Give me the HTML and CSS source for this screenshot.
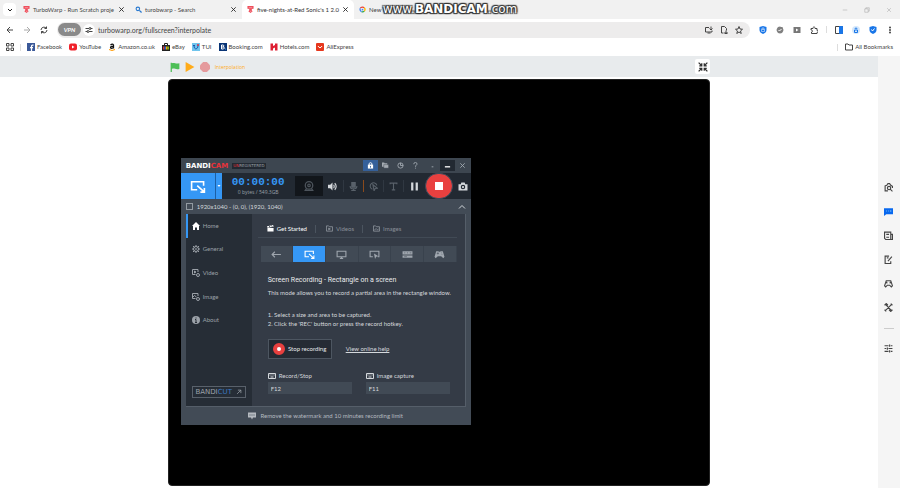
FILE: index.html
```html
<!DOCTYPE html>
<html lang="en">
<head>
    <meta charset="UTF-8">
    <meta name="viewport" content="width=device-width, initial-scale=1.0">
    <title>five-nights-at-Red Sonic's 1 2.0</title>
    <link rel="stylesheet" href="styles.css">
</head>
<body>
    <svg class="sprite" aria-hidden="true">
        <symbol id="close" viewBox="0 0 16 16"><path d="M3 3l10 10M13 3L3 13"/></symbol>
        <symbol id="warp" viewBox="0 0 16 16"><path d="M1 0h14v6l-4 1v3l2 2-5 4-5-4 2-2V7L1 6z" fill="#ef4f5c" stroke="none"/><path d="M4 4h8M7 12h3" stroke="#fff" stroke-width="1"/></symbol>
        <symbol id="region" viewBox="0 0 20 16"><path d="M9 12H2V2h15v5M9 7l8 7M18 10v5h-5"/></symbol>
        <symbol id="keyboard" viewBox="0 0 16 12"><path d="M1 1h14v10H1zM3 4h2M7 4h2M11 4h2M5 8h6"/></symbol>
    </svg>

    <header class="browser">
        <div class="tab-strip">
            <button class="tab-search" aria-label="Search tabs"><svg viewBox="0 0 16 16"><path d="M4 6l4 4 4-4"/></svg></button>
            <div class="tab">
                <svg class="favicon"><use href="#warp"/></svg>
                <a href="#">TurboWarp - Run Scratch proje</a>
                <button aria-label="Close tab"><svg><use href="#close"/></svg></button>
            </div>
            <div class="tab">
                <svg class="favicon" viewBox="0 0 16 16"><circle cx="6.500" cy="6.500" r="4" stroke="#2878cf" stroke-width="2.500"/><path d="M10 10l5 5" stroke="#2878cf" stroke-width="3"/></svg>
                <a href="#">turobwarp - Search</a>
                <button aria-label="Close tab"><svg><use href="#close"/></svg></button>
            </div>
            <div class="tab active">
                <svg class="favicon"><use href="#warp"/></svg>
                <a href="#">five-nights-at-Red Sonic's 1 2.0</a>
                <button aria-label="Close tab"><svg><use href="#close"/></svg></button>
            </div>
            <div class="tab">
                <svg class="favicon" viewBox="0 0 16 16"><g stroke-width="3"><path d="M3 5a6 6 0 0 1 9-1" stroke="#ea4335"/><path d="M12 4a6 6 0 0 1 0 8" stroke="#fbbc04"/><path d="M12 12a6 6 0 0 1-6 1" stroke="#34a853"/><path d="M6 13a6 6 0 0 1-3-8" stroke="#4285f4"/></g><circle cx="8" cy="8" r="2" fill="#4285f4" stroke="none"/></svg>
                <a href="#">New</a>
            </div>
            <div class="window-buttons">
                <button aria-label="Minimize"><svg viewBox="0 0 16 16"><path d="M2 8h12"/></svg></button>
                <button aria-label="Restore"><svg viewBox="0 0 16 16"><path d="M2 5h9v9H2zM5 5V2h9v9h-3"/></svg></button>
                <button aria-label="Close"><svg><use href="#close"/></svg></button>
            </div>
            <div class="watermark">www.<b>BANDICAM</b>.com</div>
        </div>

        <div class="toolbar">
            <button aria-label="Back"><svg viewBox="0 0 16 16"><path d="M14 8H2M8 2L2 8l6 6"/></svg></button>
            <button class="muted" aria-label="Forward"><svg viewBox="0 0 16 16"><path d="M2 8h12M8 2l6 6-6 6"/></svg></button>
            <button aria-label="Reload"><svg viewBox="0 0 16 16"><path d="M2 8a6 6 0 0 1 11-3M14 8a6 6 0 0 1-11 3M13 1v4H9M3 15v-4h4"/></svg></button>
            <div class="address">
                <button class="vpn">VPN</button>
                <button class="site-info" aria-label="Site settings"><svg viewBox="0 0 16 16"><path d="M1 5h7M11 5h4M1 11h4M8 11h7"/><circle cx="10" cy="5" r="2"/><circle cx="6" cy="11" r="2"/></svg></button>
                <input type="text" aria-label="Address" value="turbowarp.org/fullscreen?interpolate">
                <button aria-label="Install app"><svg viewBox="0 0 16 16"><path d="M8 3H1v9h13V9M5 14h6M12 1v6M9 5l3 3 3-3"/></svg></button>
                <button aria-label="Save page"><svg viewBox="0 0 16 16"><path d="M7 14H3V1h6l4 4v4M12 9v5M9 12l3 3 3-3M9 15h6"/></svg></button>
                <button aria-label="Bookmark"><svg viewBox="0 0 16 16"><path d="M8 1l2 5 5 .5-4 3.500 1.500 5L8 12l-4.500 3L5 10 1 6.500 6 6z"/></svg></button>
            </div>
            <div class="extensions">
                <button aria-label="Privacy"><svg viewBox="0 0 16 16"><path d="M8 0l7 2v6c0 4-3 6-7 8-4-2-7-4-7-8V2z" fill="#1976e8" stroke="none"/><path d="M5 7h6v4H5zM6 7V4h4v3" stroke="#fff" stroke-width="1"/></svg></button>
                <button aria-label="Checker"><svg viewBox="0 0 16 16"><path d="M8 1l2 1 3 0 1 3 1 3-1 3-2 3-4 1-4-1-2-3-1-3 1-3 2-3z" fill="#808080" stroke="none"/><path d="M5 8l2 2 4-4" stroke="#fff"/></svg></button>
                <button aria-label="Video"><svg viewBox="0 0 16 16"><path d="M1 2h14v12H1z" fill="#777" stroke="none"/><path d="M6 5l5 3-5 3z" fill="#fff" stroke="none"/></svg></button>
                <button aria-label="Extensions"><svg viewBox="0 0 16 16"><path d="M2 5h4c-1-4 5-4 4 0h4v4c3-1 3 4 0 4v2H3v-3c3 0 3-4-1-4z"/></svg></button>
                <span class="divider"></span>
                <button aria-label="Side panel"><svg viewBox="0 0 16 16"><path d="M1 1h14v14H1z"/><path d="M9 1h6v14H9z" fill="#1976e8" stroke="#1976e8"/></svg></button>
                <button class="profile" aria-label="Profile"><svg viewBox="0 0 16 16"><circle cx="8" cy="8" r="8" fill="#d4e7fb" stroke="none"/><path d="M5 8h6v5H5zM6 6a2 2 0 1 1 4 0" stroke="#1976e8"/></svg></button>
                <button aria-label="Security"><svg viewBox="0 0 16 16"><path d="M8 0l7 2v6c0 4-3 6-7 8-4-2-7-4-7-8V2z" fill="#1976e8" stroke="none"/><path d="M5 7l2 3 4-5" stroke="#fff"/></svg></button>
                <button aria-label="Menu"><svg viewBox="0 0 16 16"><g fill="#444" stroke="none"><circle cx="8" cy="3" r="2"/><circle cx="8" cy="8" r="2"/><circle cx="8" cy="13" r="2"/></g></svg></button>
            </div>
        </div>

        <nav class="bookmarks" aria-label="Bookmarks">
            <button aria-label="Apps"><svg viewBox="0 0 16 16"><path d="M1 1h5v5H1zM10 1h5v5h-5zM1 10h5v5H1zM10 10h5v5h-5z"/></svg></button>
            <span class="divider"></span>
            <a href="#"><svg viewBox="0 0 16 16"><path d="M0 0h16v16H0z" fill="#3b5998" stroke="none"/><path d="M13 4h-2q-2 0-2 2v10M6 9h6" stroke="#fff" stroke-width="2.500"/></svg>Facebook</a>
            <a href="#"><svg viewBox="0 0 16 16"><rect y="1" width="16" height="14" rx="4" fill="#f0202a" stroke="none"/><path d="M6 5l5 3-5 3z" fill="#fff" stroke="none"/></svg>YouTube</a>
            <a href="#"><svg viewBox="0 0 16 16"><path d="M5 4q4-4 6 0v7M11 6q-6 0-6 3 1 3 6 0" stroke="#111" stroke-width="2.500"/><path d="M2 13q6 4 12 0" stroke="#f90" stroke-width="2"/></svg>Amazon.co.uk</a>
            <a href="#"><svg viewBox="0 0 16 16"><path d="M5 5V1h6v4" stroke="#222"/><path d="M0 4h16v12H0z" fill="#222" stroke="none"/><path d="M2 7h3v6H2z" fill="#e53238" stroke="none"/><path d="M5 7h3v6H5z" fill="#2864d2" stroke="none"/><path d="M8 7h3v6H8z" fill="#f5af02" stroke="none"/><path d="M11 7h3v6h-3z" fill="#86b817" stroke="none"/></svg>eBay</a>
            <a href="#"><svg viewBox="0 0 16 16"><path d="M0 0h16v16H0z" fill="#70c5ed" stroke="none"/><path d="M4 5c0 10 8 8 8 0M2 5h4" stroke="#1754ad" stroke-width="2"/><circle cx="12" cy="4" r="2" fill="#d92d42" stroke="none"/></svg>TUI</a>
            <a href="#"><svg viewBox="0 0 16 16"><path d="M0 0h16v16H0z" fill="#0a3576" stroke="none"/><path d="M5 4v8h4q4-2 0-4 2-4-1-4zM5 8h4" stroke="#fff" stroke-width="2"/><circle cx="13" cy="12" r="1" fill="#4fb9ff" stroke="none"/></svg>Booking.com</a>
            <a href="#"><svg viewBox="0 0 16 16"><path d="M1 1h5v5l4-2V1h5v14h-5V9l-4 2v4H1z" fill="#dd1f32" stroke="none"/></svg>Hotels.com</a>
            <a href="#"><svg viewBox="0 0 16 16"><rect width="16" height="16" rx="2" fill="#e6371d" stroke="none"/><path d="M4 6q4 7 8 0" stroke="#fff" stroke-width="2"/></svg>AliExpress</a>
            <div class="all-bookmarks">
                <span class="divider"></span>
                <a href="#"><svg viewBox="0 0 16 16"><path d="M1 2h5l2 2h7v10H1z"/></svg>All Bookmarks</a>
            </div>
        </nav>
    </header>

    <div class="viewport">
        <main class="page">
            <div class="player-bar">
                <div class="player-controls">
                    <button aria-label="Green flag"><svg viewBox="0 0 16 16"><path d="M1 1v15h2v-5c4-2 6 2 12 0V2C9 4 7 0 3 2V1z" fill="#4cbf56" stroke="none"/></svg></button>
                    <button aria-label="Resume"><svg viewBox="0 0 16 16"><path d="M1 0l14 8-14 8z" fill="#ffab19" stroke="none"/></svg></button>
                    <button aria-label="Stop"><svg viewBox="0 0 16 16"><path d="M5 0h6l5 5v6l-5 5H5l-5-5V5z" fill="#e59a9d" stroke="none"/></svg></button>
                    <span>Interpolation</span>
                    <button class="shrink" aria-label="Exit fullscreen"><svg viewBox="0 0 16 16"><path d="M1 1l5 5M6 2v4H2M15 1l-5 5M10 2v4h4M1 15l5-5M6 14v-4H2M15 15l-5-5M10 14v-4h4"/></svg></button>
                </div>
            </div>
            <div class="stage">
                <section class="bandicam" aria-label="Bandicam">
                    <div class="title-bar">
                        <strong class="logo">BANDI<em>CAM</em></strong>
                        <span class="unregistered"><em>UN</em>REGISTERED</span>
                        <div class="title-buttons">
                            <button class="lock" aria-label="Register"><svg viewBox="0 0 16 16"><path d="M2 6h12v9H2z" fill="#fff" stroke="none"/><path d="M5 7V3q3-3 6 0v4" stroke="#fff"/><path d="M8 9v4" stroke="#35609a"/></svg></button>
                            <button aria-label="Open folder"><svg viewBox="0 0 16 16"><path d="M0 1h5l1 2h6v8H0z" fill="#a4abb2" stroke="none"/><path d="M4 6h11v8H4z" fill="#a4abb2" stroke="#3d4650" stroke-width="1"/></svg></button>
                            <button aria-label="Timer"><svg viewBox="0 0 16 16"><circle cx="8" cy="8" r="6"/><path d="M8 2v6h6"/></svg></button>
                            <button aria-label="Help"><svg viewBox="0 0 16 16"><path d="M4 5q0-4 4-4 5 1 3 5-3 2-3 5M8 13v2"/></svg></button>
                            <button class="spaced" aria-label="Tray"><svg viewBox="0 0 16 16"><path d="M6 11h4"/></svg></button>
                            <button class="minimize" aria-label="Minimize"><svg viewBox="0 0 16 16"><path d="M2 11h12" stroke-width="3"/></svg></button>
                            <button aria-label="Close"><svg><use href="#close"/></svg></button>
                        </div>
                    </div>

                    <div class="record-bar">
                        <button class="mode" aria-label="Rectangle mode"><svg><use href="#region"/></svg></button>
                        <button class="mode-menu" aria-label="Choose mode"><svg viewBox="0 0 8 8"><path d="M1 2h6L4 6z" fill="#fff" stroke="none"/></svg></button>
                        <div class="clock"><time>00:00:00</time><small>0 bytes / 549.3GB</small></div>
                        <button class="webcam" aria-label="Webcam"><svg viewBox="0 0 16 16"><circle cx="8" cy="7" r="6"/><circle cx="8" cy="7" r="2"/><path d="M4 12l-2 3h12l-2-3"/></svg></button>
                        <div class="tools">
                            <button class="bright" aria-label="Sound"><svg viewBox="0 0 16 16"><path d="M0 5h4l4-4v14l-4-4H0z" fill="#d4d8dc" stroke="none"/><path d="M10 5q2 3 0 6M12 2q5 6 0 12"/></svg></button>
                            <button aria-label="Microphone"><svg viewBox="0 0 16 16"><path d="M5 1h6v8H5z" fill="#59616a"/><path d="M2 7c0 7 12 7 12 0M8 12v3M4 15h8"/></svg></button>
                            <button class="warm" aria-label="Mouse effects"><svg viewBox="0 0 16 16"><path d="M6 13A6 6 0 1 1 14 6M7 5l8 6-4 .5-2 4z"/></svg></button>
                            <button aria-label="Text"><svg viewBox="0 0 16 16"><path d="M2 4V2h12v2M8 2v12M5 14h6"/></svg></button>
                            <button class="bright pause" aria-label="Pause"><svg viewBox="0 0 16 16"><path d="M4 1v14M12 1v14" stroke-width="4"/></svg></button>
                        </div>
                        <button class="rec" aria-label="Stop recording"><span></span></button>
                        <button class="camera" aria-label="Screenshot"><svg viewBox="0 0 16 16"><path d="M0 4h4l1-3h6l1 3h4v11H0z" fill="#d4d8dc" stroke="none"/><circle cx="8" cy="9" r="3" stroke="#222932"/></svg></button>
                    </div>

                    <div class="area">
                        <input type="checkbox" id="area">
                        <label for="area">1920x1040 - (0, 0), (1920, 1040)</label>
                        <button aria-label="Collapse"><svg viewBox="0 0 16 16"><path d="M2 11l6-6 6 6"/></svg></button>
                    </div>

                    <div class="panel">
                        <nav class="menu" aria-label="Sections">
                            <ul>
                                <li class="current"><a href="#"><svg viewBox="0 0 16 16"><path d="M8 0L0 8h2v8h4v-5h4v5h4V8h2z" fill="#fff" stroke="none"/></svg>Home</a></li>
                                <li><a href="#"><svg viewBox="0 0 16 16"><circle cx="8" cy="8" r="5"/><circle cx="8" cy="8" r="1"/><path d="M8 0v3M8 13v3M0 8h3M13 8h3M2 2l3 3M11 11l3 3M14 2l-3 3M5 11l-3 3"/></svg>General</a></li>
                                <li><a href="#"><svg viewBox="0 0 16 16"><path d="M7 11H1V1h11v5M5 4l3 2-3 2z"/><circle cx="12" cy="12" r="3"/></svg>Video</a></li>
                                <li><a href="#"><svg viewBox="0 0 16 16"><path d="M7 11H1V1h11v5M1 9l4-4 4 3"/><circle cx="12" cy="12" r="3"/></svg>Image</a></li>
                                <li><a href="#"><svg viewBox="0 0 16 16"><circle cx="8" cy="8" r="8" fill="#9ba1a8" stroke="none"/><path d="M8 3v2M6 7h2v6M6 13h4" stroke="#262d36" stroke-width="2"/></svg>About</a></li>
                            </ul>
                            <a class="bandicut" href="#"><span>BANDI<em>CUT</em></span><svg viewBox="0 0 16 16"><path d="M3 13L13 3M5 3h8v8"/></svg></a>
                        </nav>
                        <div class="content">
                            <div class="tabs">
                                <a class="current" href="#"><svg viewBox="0 0 16 16"><path d="M1 7h14v8H1zM0 3l14-3 1 4-14 2z" fill="#fff" stroke="none"/><path d="M5 2l2 3M10 1l2 3" stroke="#343b46"/></svg>Get Started</a>
                                <a href="#"><svg viewBox="0 0 16 16"><path d="M1 2h5l2 2h7v10H1zM6 7l4 2-4 2z"/></svg>Videos</a>
                                <a href="#"><svg viewBox="0 0 16 16"><path d="M1 2h5l2 2h7v10H1zM3 12l4-4 3 3 3-2"/></svg>Images</a>
                            </div>
                            <div class="modes">
                                <button aria-label="Back"><svg viewBox="0 0 20 16"><path d="M18 8H2M7 3L2 8l5 5"/></svg></button>
                                <button class="current" aria-label="Rectangle on a screen"><svg><use href="#region"/></svg></button>
                                <button aria-label="Fullscreen"><svg viewBox="0 0 20 16"><path d="M2 2h16v10H2zM7 15h6M10 12v3"/></svg></button>
                                <button aria-label="Around mouse"><svg viewBox="0 0 20 16"><path d="M7 12H2V2h16v10h-2"/><path d="M9 6l8 5-4 1-2 4z" fill="#9fa6ae" stroke="none"/></svg></button>
                                <button aria-label="Device recording"><svg viewBox="0 0 20 16"><path d="M1 2h18v6H1zM1 10h18v4H1z" fill="#9fa6ae" stroke="none"/><path d="M4 5h2M9 5h2M14 5h3M4 12h5" stroke="#414a55" stroke-width="1"/></svg></button>
                                <button aria-label="Game recording"><svg viewBox="0 0 20 16"><path d="M4 2h4l1 1h2l1-1h4l3 10-2 3-4-4H7l-4 4-2-3z" fill="#9fa6ae" stroke="none"/><path d="M5 6h4M7 4v4M13 5h1M14 8h1" stroke="#414a55" stroke-width="1"/></svg></button>
                            </div>
                            <div class="details">
                                <h1>Screen Recording - Rectangle on a screen</h1>
                                <p>This mode allows you to record a partial area in the rectangle window.</p>
                                <ol>
                                    <li>1. Select a size and area to be captured.</li>
                                    <li>2. Click the 'REC' button or press the record hotkey.</li>
                                </ol>
                                <div class="actions">
                                    <button class="stop"><span class="stop-icon"></span>Stop recording</button>
                                    <a href="#">View online help</a>
                                </div>
                                <div class="hotkeys">
                                    <div>
                                        <label for="record-key"><svg><use href="#keyboard"/></svg>Record/Stop</label>
                                        <input type="text" id="record-key" value="F12">
                                    </div>
                                    <div>
                                        <label for="capture-key"><svg><use href="#keyboard"/></svg>Image capture</label>
                                        <input type="text" id="capture-key" value="F11">
                                    </div>
                                </div>
                            </div>
                        </div>
                    </div>

                    <a class="limit" href="#"><svg viewBox="0 0 16 16"><path d="M0 1h16v10h-6l-2 4-2-4H0z" fill="#b5bac0" stroke="none"/><path d="M3 6h2M7 6h2M11 6h2" stroke="#424b56" stroke-width="2"/></svg>Remove the watermark and 10 minutes recording limit</a>
                </section>
            </div>
        </main>

        <aside class="side-panel">
            <button aria-label="Visual search"><svg viewBox="0 0 16 16"><path d="M7 14H2V5l3-1 2-3h3l2 3 3 2v3"/><circle cx="9" cy="9" r="3"/><path d="M11 11l4 4"/></svg></button>
            <button aria-label="Chat"><svg viewBox="0 0 16 16"><path d="M0 2h16v11H4l-4 3z" fill="#0868ee" stroke="none"/><path d="M4 7h1M8 7h1M11 7h2" stroke="#a8e5ff" stroke-width="2"/></svg></button>
            <button aria-label="News"><svg viewBox="0 0 16 16"><path d="M1 2h11v13H3l-2-2zM12 6h3v9h-3M4 6h5M4 11h5"/></svg></button>
            <button aria-label="Notes"><svg viewBox="0 0 16 16"><path d="M9 2H2v13h10v-4M5 5h3M7 11l7-8"/></svg></button>
            <button aria-label="Games"><svg viewBox="0 0 16 16"><path d="M4 3h8l3 9-2 2-3-3H6l-3 3-2-2zM5 5v3M11 5v3"/></svg></button>
            <button aria-label="Tools"><svg viewBox="0 0 16 16"><path d="M2 2l12 12M14 2L2 14M1 4l3-3 3 3M9 12l3 3 3-3M12 1l3 3M1 12l3 3"/></svg></button>
            <hr>
            <button aria-label="Customize"><svg viewBox="0 0 16 16"><path d="M1 3h7M12 3h3M1 8h3M8 8h7M1 13h7M12 13h3M10 1v4M6 6v4M10 11v4"/></svg></button>
        </aside>
    </div>
</body>
</html>
```
FILE: styles.css
```css
:root {
    --font-ui: Lato, "Open Sans", sans-serif;
    --font-wide: "DejaVu Sans", sans-serif;
    --blue: #3597f5;
    --frame: #424b56;
    --dark: #262d36;
}

* { box-sizing: border-box; }
html, body { height: 100%; margin: 0; }
body {
    display: flex;
    flex-direction: column;
    overflow: hidden;
    background: #fff;
    color: #444;
    font: 6px/8px var(--font-ui);
}
button, input { font: inherit; color: inherit; }
button {
    display: flex;
    align-items: center;
    justify-content: center;
    padding: 0;
    border: 0;
    background: none;
}
a { color: inherit; text-decoration: none; }
em { font-style: normal; }
svg {
    flex: none;
    width: 8px;
    height: 8px;
    fill: none;
    stroke: currentColor;
    stroke-width: 2;
}
.sprite { position: absolute; width: 0; height: 0; }
.divider { width: 1px; height: 7px; background: #ddd; }

/* Browser chrome */
.tab-strip {
    position: relative;
    display: flex;
    height: 19px;
    padding-left: 3px;
    background: #f1f1f1;
}
.tab-search {
    width: 13px;
    height: 13px;
    margin: 3px 2px 0 0;
    border-radius: 4px;
    background: #fff;
    color: #222;
}
.tab {
    display: flex;
    flex: 0 1 112px;
    align-items: center;
    gap: 3px;
    min-width: 0;
    padding: 0 5px;
    border-radius: 5px 5px 0 0;
}
.tab.active { background: #fff; color: #333; }
.tab a { flex: 1; white-space: nowrap; }
.tab svg { width: 7px; height: 7px; }
.tab button { color: #222; }
.window-buttons {
    display: flex;
    gap: 14px;
    margin-left: auto;
    padding-right: 7px;
    color: #888;
}
.window-buttons svg { width: 8px; height: 6px; stroke-width: 1; }
.watermark {
    position: absolute;
    top: 0;
    left: 0;
    right: 0;
    color: #fff;
    font: 12px/19px var(--font-wide);
    text-align: center;
    text-shadow: 0 0 1px #333, 0 0 2px #333, 1px 1px 1px #333, -1px -1px 1px #333, 1px -1px 1px #333, -1px 1px 1px #333;
    pointer-events: none;
}
.toolbar {
    display: flex;
    align-items: center;
    gap: 9px;
    height: 21px;
    padding: 0 6px;
    color: #444;
}
.toolbar .muted { color: #aaa; }
.address {
    display: flex;
    flex: 1;
    align-items: center;
    gap: 7px;
    height: 16px;
    padding: 0 7px 0 1px;
    border-radius: 8px;
    background: #edecec;
}
.address input {
    flex: 1;
    min-width: 0;
    margin-left: -4px;
    padding: 0;
    border: 0;
    background: none;
    font-size: 7px;
}
.vpn {
    width: 23px;
    height: 13px;
    border-radius: 7px;
    background: #8a8a8a;
    color: #fff;
    font-weight: bold;
    font-style: italic;
}
.site-info {
    width: 12px;
    height: 12px;
    margin-left: -5px;
    border-radius: 6px;
    background: #fff;
}
.extensions { display: flex; align-items: center; gap: 9px; }
.extensions .divider { margin: 0 -1px; }
.bookmarks {
    display: flex;
    align-items: center;
    gap: 7px;
    height: 16px;
    padding: 0 7px 2px 6px;
}
.bookmarks a { display: flex; align-items: center; gap: 2px; }
.bookmarks > .divider { margin: 0 -1px; }
.all-bookmarks { display: flex; align-items: center; gap: 7px; margin-left: auto; }

/* TurboWarp page */
.viewport { display: flex; flex: 1; min-height: 0; }
.page {
    display: flex;
    flex: 1;
    flex-direction: column;
    align-items: center;
}
.player-bar {
    display: flex;
    justify-content: center;
    width: 100%;
    height: 21px;
    margin-bottom: 2px;
    background: #e8ebed;
}
.player-controls {
    display: flex;
    align-items: center;
    gap: 5px;
    width: calc((100vh - 81px) * 4 / 3);
    padding-left: 2px;
    color: #ffab19;
}
.player-controls svg { width: 10px; height: 10px; }
.player-controls span { font: 5px/8px "Open Sans", sans-serif; }
.player-controls .shrink {
    width: 15px;
    height: 15px;
    margin-left: auto;
    border-radius: 2px;
    background: #fff;
    color: #333;
}
.stage {
    position: relative;
    flex: 1;
    aspect-ratio: 4 / 3;
    margin-bottom: 2px;
    border: 1px solid #222;
    border-radius: 4px;
    background: #000;
}
.side-panel {
    display: flex;
    flex-direction: column;
    align-items: center;
    justify-content: center;
    width: 22px;
    padding: 0 1px 8px 0;
    background: #f5f5f5;
}
.side-panel button { width: 20px; height: 24px; }
.side-panel svg { width: 9px; height: 9px; }
.side-panel hr { width: 10px; margin: 8px 0; border: 0; border-top: 1px solid #ccc; }

/* Bandicam window */
.bandicam {
    position: absolute;
    top: 78px;
    left: 12px;
    width: 290px;
    background: var(--frame);
    color: #d4d8dc;
}
.title-bar {
    display: flex;
    align-items: center;
    gap: 4px;
    height: 15px;
    padding: 0 1px 0 5px;
    background: #3d4650;
}
.logo { color: #fff; font: bold 7px/8px var(--font-wide); }
.logo em, .unregistered em { color: #e8323a; }
.unregistered {
    padding: 0 1px;
    background: #222932;
    color: #9aa0a6;
    font: 4px/6px var(--font-wide);
}
.title-buttons { display: flex; margin-left: auto; color: #a4abb2; }
.title-buttons button { width: 15px; height: 11px; }
.title-buttons svg { width: 7px; height: 7px; }
.title-buttons .lock { background: #35609a; }
.title-buttons .spaced { margin-left: 2px; }
.title-buttons .minimize { background: #222932; color: #fff; }
.record-bar {
    display: flex;
    align-items: center;
    height: 26px;
    background: #222932;
}
.mode, .mode-menu { height: 26px; background: var(--blue); color: #fff; }
.mode { width: 34px; }
.mode svg { width: 16px; height: 13px; }
.mode-menu { width: 7px; border-left: 1px solid #1c5fa5; }
.mode-menu svg { width: 4px; height: 4px; }
.clock { flex: 1; text-align: center; }
.clock time, .clock small { display: block; }
.clock time {
    color: var(--blue);
    font: bold 11px/11px "Liberation Mono", monospace;
}
.clock small { color: #9aa1a9; font: 5px/8px "Open Sans", sans-serif; }
.webcam { width: 28px; height: 20px; background: #12161b; color: #4d545c; }
.webcam svg { width: 10px; height: 10px; }
.tools { display: flex; }
.tools button { width: 20px; height: 12px; color: #59616a; }
.tools button + button { border-left: 1px solid #303842; }
.tools button.warm { border-color: #8a4a1c; }
.tools button.pause { width: 22px; }
.tools svg { width: 9px; height: 9px; }
.tools .bright { color: #d4d8dc; }
.rec {
    width: 28px;
    height: 26px;
    border: 1px solid #3a4d5d;
    border-radius: 14px;
    background: #e9403f;
}
.rec span { width: 8px; height: 8px; background: #fff; }
.camera { width: 18px; padding-left: 2px; }
.camera svg { width: 10px; height: 9px; }
.area {
    display: flex;
    align-items: center;
    gap: 4px;
    height: 15px;
    padding: 0 5px;
}
.area input {
    appearance: none;
    width: 7px;
    height: 7px;
    margin: 0;
    border: 1px solid #929aa2;
}
.area button { margin-left: auto; }
.panel {
    display: flex;
    height: 193px;
    margin: 0 5px;
    border: 1px solid #555e69;
    border-width: 0 1px 1px 0;
    background: #343b46;
}
.menu {
    display: flex;
    flex: none;
    flex-direction: column;
    justify-content: space-between;
    width: 66px;
    padding-bottom: 8px;
    background: var(--dark);
    color: #9ba1a8;
}
.menu ul {
    display: grid;
    height: 118px;
    margin: 0;
    padding: 0;
    list-style: none;
}
.menu li { display: flex; padding-left: 4px; border-left: 2px solid transparent; }
.menu li.current { border-color: var(--blue); }
.menu li a { display: flex; align-items: center; gap: 3px; }
.bandicut {
    display: flex;
    align-items: center;
    justify-content: center;
    gap: 4px;
    height: 12px;
    margin: 0 6px;
    border: 1px solid #59616b;
    font: 7px/8px var(--font-wide);
}
.bandicut em { color: #3b79c4; }
.bandicut svg { width: 6px; height: 6px; }
.content { flex: 1; min-width: 0; padding: 6px 8px 0 6px; }
.tabs {
    display: flex;
    align-items: center;
    height: 18px;
    padding-left: 9px;
    border-bottom: 1px solid #414a55;
    color: #8a9199;
}
.tabs a { display: flex; align-items: center; gap: 3px; }
.tabs a + a { margin-left: 8px; padding-left: 10px; border-left: 1px solid #4b545f; }
.tabs .current { color: #fff; }
.tabs svg { width: 7px; height: 7px; }
.modes {
    display: flex;
    margin: 8px 0 0 3px;
    background: #414a55;
    color: #9fa6ae;
}
.modes button { flex: 1; height: 16px; border-right: 1px solid #39424d; }
.modes .current { background: var(--blue); color: #fff; }
.modes svg { width: 11px; height: 9px; }
.details { padding: 13px 0 0 10px; }
.details h1 {
    margin: 0;
    color: #e8eaec;
    font: 7px/10px Roboto, sans-serif;
}
.details p { margin: 3px 0 13px; }
.details p, .details ol { line-height: 9px; white-space: nowrap; }
.details ol { margin: 0; padding: 0; list-style: none; }
.actions { display: flex; align-items: center; gap: 14px; margin-top: 11px; }
.actions a { text-decoration: underline; }
.stop {
    gap: 3px;
    width: 64px;
    height: 20px;
    border: 1px solid #4d5661;
    background: #252b34;
    color: #e8eaec;
}
.stop-icon {
    width: 12px;
    height: 12px;
    border: 4px solid #e9403f;
    border-radius: 6px;
    background: #fff;
}
.hotkeys {
    display: grid;
    grid-template-columns: 1fr 1fr;
    gap: 14px;
    margin-top: 13px;
    padding-right: 7px;
}
.hotkeys label { display: flex; align-items: center; gap: 3px; margin-bottom: 2px; }
.hotkeys svg { height: 6px; }
.hotkeys input {
    display: block;
    width: 100%;
    height: 12px;
    padding: 0 3px;
    border: 0;
    background: #414a55;
}
.limit {
    display: flex;
    align-items: center;
    justify-content: center;
    gap: 4px;
    height: 18px;
    color: #b5bac0;
}
```
